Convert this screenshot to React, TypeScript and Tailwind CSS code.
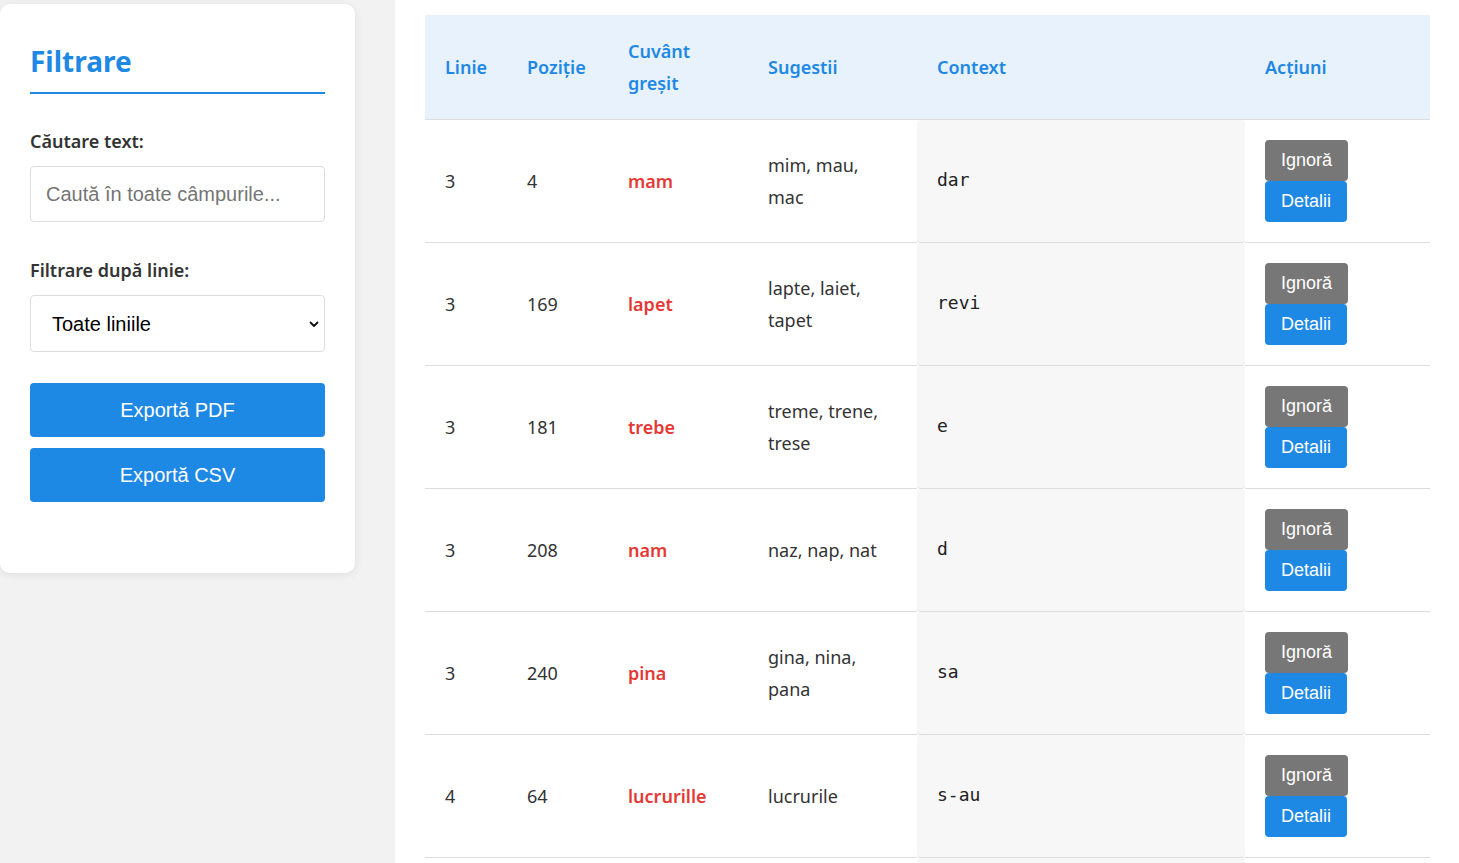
const rows = [
  { line: 3, pos: 4, word: 'mam', sugg: 'mim, mau, mac', ctx: 'dar' },
  { line: 3, pos: 169, word: 'lapet', sugg: 'lapte, laiet, tapet', ctx: 'revi' },
  { line: 3, pos: 181, word: 'trebe', sugg: 'treme, trene, trese', ctx: 'e' },
  { line: 3, pos: 208, word: 'nam', sugg: 'naz, nap, nat', ctx: 'd' },
  { line: 3, pos: 240, word: 'pina', sugg: 'gina, nina, pana', ctx: 'sa' },
  { line: 4, pos: 64, word: 'lucrurille', sugg: 'lucrurile', ctx: 's-au' },
];

const uiFont = "font-['Noto_Sans',sans-serif]";

function Sidebar() {
  return (
    <aside className="mt-[4px] w-[355px] shrink-0 self-start rounded-[10px] bg-white px-[30px] pt-[30px] pb-[71px] shadow-[0_2px_10px_rgba(0,0,0,0.08)]">
      <h2 className="border-b-2 border-[#1e88e5] pt-[5px] pb-[9px] text-[28px] leading-[44px] font-bold text-[#1e88e5]">
        Filtrare
      </h2>

      <div className="mt-[33px]">
        <label className="block text-[18px] leading-[28px] font-semibold text-[#333]">Căutare text:</label>
        <input
          type="text"
          placeholder="Caută în toate câmpurile..."
          className="mt-[11px] block h-[56px] w-full rounded-[4px] border border-[#ddd] bg-white px-[15px] font-['Liberation_Sans',Arial,sans-serif] text-[20px] text-[#333] placeholder:text-[#757575] focus:outline-none"
        />
      </div>

      <div className="mt-[34px]">
        <label className="block text-[18px] leading-[28px] font-semibold text-[#333]">Filtrare după linie:</label>
        <div className="relative mt-[11px]">
          <select className="block h-[57px] w-full appearance-none rounded-[4px] border border-[#ddd] bg-white pr-[40px] pl-[21px] font-['Liberation_Sans',Arial,sans-serif] text-[20px] text-black focus:outline-none">
            <option>Toate liniile</option>
          </select>
          <svg className="pointer-events-none absolute top-1/2 right-[5px] h-[12px] w-[12px] -translate-y-1/2" viewBox="0 0 12 12" fill="none">
            <path d="M2.5 4.5 6 8l3.5-3.5" stroke="#111" strokeWidth="1.8" strokeLinecap="round" strokeLinejoin="round" />
          </svg>
        </div>
      </div>

      <div className="mt-[31px] flex flex-col gap-[11px] font-['Liberation_Sans',Arial,sans-serif]">
        <button type="button" className="h-[54px] w-full rounded-[4px] bg-[#1e88e5] text-[20px] text-white">
          Exportă PDF
        </button>
        <button type="button" className="h-[54px] w-full rounded-[4px] bg-[#1e88e5] text-[20px] text-white">
          Exportă CSV
        </button>
      </div>
    </aside>
  );
}

function ResultsTable() {
  return (
    <table className="w-[1005px] table-fixed border-separate border-spacing-0 text-left">
      <colgroup>
        <col className="w-[82px]" />
        <col className="w-[101px]" />
        <col className="w-[140px]" />
        <col className="w-[169px]" />
        <col className="w-[328px]" />
        <col className="w-[185px]" />
      </colgroup>
      <thead>
        <tr className="bg-[#e8f2fc] text-[18px] leading-[32px] font-semibold text-[#1e88e5]">
          {['Linie', 'Poziție', 'Cuvânt greșit', 'Sugestii', 'Context', 'Acțiuni'].map((h) => (
            <th key={h} className="border-b border-[#ddd] p-[20px] align-middle font-semibold">
              {h}
            </th>
          ))}
        </tr>
      </thead>
      <tbody className="text-[18px] leading-[32px] text-[#333]">
        {rows.map((r) => (
          <tr key={`${r.line}-${r.pos}`}>
            <td className="border-b border-[#ddd] p-[20px] align-middle">{r.line}</td>
            <td className="border-b border-[#ddd] p-[20px] align-middle">{r.pos}</td>
            <td className="border-b border-[#ddd] p-[20px] align-middle font-semibold text-[#e53935]">{r.word}</td>
            <td className="border-b border-[#ddd] p-[20px] align-middle">{r.sugg}</td>
            <td className="rounded-[4px] border-b border-[#ddd] bg-[#f7f7f7] p-[20px] align-middle font-['DejaVu_Sans_Mono',monospace] text-[18px] text-[#222]">
              <span className="relative -top-[1px]">{r.ctx}</span>
            </td>
            <td className="border-b border-[#ddd] p-[20px] align-middle">
              <div className="flex flex-col items-start font-['Liberation_Sans',Arial,sans-serif] text-[18px] leading-[21px] text-white">
                <button type="button" className="rounded-[4px] bg-[#777] px-[16px] py-[10px]">
                  Ignoră
                </button>
                <button type="button" className="rounded-[4px] bg-[#1e88e5] px-[16px] py-[10px]">
                  Detalii
                </button>
              </div>
            </td>
          </tr>
        ))}
        <tr className="h-[60px]">
          <td colSpan={4} />
          <td className="rounded-[4px] bg-[#f7f7f7]" />
          <td />
        </tr>
      </tbody>
    </table>
  );
}

export default function App() {
  return (
    <div className={`flex h-screen gap-[40px] overflow-hidden bg-[#f2f2f2] ${uiFont}`}>
      <Sidebar />
      <main className="flex-1 bg-white px-[30px] pt-[15px]">
        <ResultsTable />
      </main>
    </div>
  );
}
